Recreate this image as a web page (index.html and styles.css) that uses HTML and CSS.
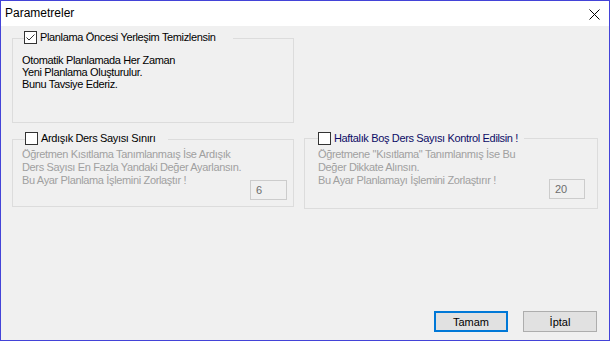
FILE: index.html
```html
<!DOCTYPE html>
<html lang="tr">
<head>
<meta charset="utf-8">
<title>Parametreler</title>
<link rel="stylesheet" href="styles.css">
</head>
<body>
<div class="window">
  <div class="titlebar">
    <span class="title">Parametreler</span>
    <svg class="close" width="11" height="11" viewBox="0 0 11 11"><path d="M0.5 0.5 L10.5 10.5 M10.5 0.5 L0.5 10.5" stroke="#000" stroke-width="1" fill="none"/></svg>
  </div>
  <div class="content">
    <div class="group g1">
      <div class="legend l1">
        <span class="box"><svg width="11" height="11" viewBox="0 0 11 11"><path d="M1.5 5.5 L4 8 L9.5 2.5" stroke="#333" stroke-width="1" fill="none"/></svg></span>
        <span class="ltext">Planlama Öncesi Yerleşim Temizlensin</span>
      </div>
      <div class="info">Otomatik Planlamada Her Zaman<br>Yeni Planlama Oluşturulur.<br>Bunu Tavsiye Ederiz.</div>
    </div>
    <div class="row">
      <div class="group g2">
        <div class="legend l2">
          <span class="box"></span>
          <span class="ltext">Ardışık Ders Sayısı Sınırı</span>
        </div>
        <div class="body">
          <div class="gray">Öğretmen Kısıtlama Tanımlanmaış İse Ardışık<br>Ders Sayısı En Fazla Yandaki Değer Ayarlansın.<br>Bu Ayar Planlama İşlemini Zorlaştır !</div>
          <div class="num n2">6</div>
        </div>
      </div>
      <div class="group g3">
        <div class="legend l3">
          <span class="box"></span>
          <span class="ltext navy">Haftalık Boş Ders Sayısı Kontrol Edilsin !</span>
        </div>
        <div class="body">
          <div class="gray">Öğretmene "Kısıtlama" Tanımlanmış İse Bu<br>Değer Dikkate Alınsın.<br>Bu Ayar Planlamayı İşlemini Zorlaştırır !</div>
          <div class="num n3">20</div>
        </div>
      </div>
    </div>
    <div class="buttons">
      <div class="btn default">Tamam</div>
      <div class="btn">İptal</div>
    </div>
  </div>
</div>
</body>
</html>
```
FILE: styles.css
```css
html, body {
  margin: 0;
  padding: 0;
  background: #f0f0f0;
}
.window {
  width: 610px;
  height: 341px;
  box-sizing: border-box;
  border: 1px solid #4343d8;
  display: flex;
  flex-direction: column;
  font-family: "Liberation Sans", Arial, sans-serif;
  font-size: 11px;
  color: #000;
}
.titlebar {
  height: 25px;
  background: #fff;
  display: flex;
  align-items: center;
  justify-content: space-between;
  padding: 0 9px 0 4px;
}
.title {
  font-size: 12px;
  margin-top: -1px;
}
.close {
  display: block;
  margin-top: 1px;
}
.content {
  flex: 1;
  background: #f0f0f0;
  display: flex;
  flex-direction: column;
  padding: 12px 11px 8px 11px;
  letter-spacing: -0.35px;
}
.group {
  border: 1px solid #dcdcdc;
  box-sizing: border-box;
  display: flex;
  flex-direction: column;
}
.g1 {
  width: 282px;
  height: 85px;
  padding-left: 9px;
}
.legend {
  display: flex;
  align-items: center;
  height: 13px;
  background: #f0f0f0;
  margin-top: -8px;
  white-space: nowrap;
}
.l1 { width: 209px; margin-left: 2px; }
.l2 { width: 143px; margin-left: 3px; }
.l3 { width: 206px; margin-left: 0; margin-top: -7px; }
.box {
  width: 11px;
  height: 11px;
  border: 1px solid #333;
  background: #fff;
  flex: none;
  display: flex;
}
.box svg { display: block; }
.ltext {
  margin-left: 3px;
  line-height: 13px;
}
.navy { color: #0c0c66; }
.info {
  margin-top: 10px;
  line-height: 12px;
}
.row {
  display: flex;
  align-items: flex-start;
  gap: 10px;
  margin-top: 16px;
}
.g2 {
  width: 282px;
  height: 68px;
  padding: 0 6px 0 9px;
}
.g3 {
  width: 294px;
  height: 71px;
  margin-top: -1px;
  padding: 0 12px 0 13px;
}
.body {
  display: flex;
  justify-content: space-between;
  margin-top: 3px;
}
.gray {
  color: #a0a0a0;
  line-height: 13px;
  white-space: nowrap;
}
.num {
  width: 37px;
  height: 20px;
  box-sizing: border-box;
  border: 1px solid #cccccc;
  color: #6d6d6d;
  line-height: 18px;
  padding-left: 5px;
  flex: none;
  letter-spacing: 0;
}
.n2 { margin-top: 32px; }
.n3 { margin-top: 31px; width: 36px; }
.buttons {
  margin-top: auto;
  display: flex;
  justify-content: flex-end;
  gap: 15px;
  padding-right: 1px;
  letter-spacing: 0;
}
.btn {
  width: 74px;
  height: 21px;
  box-sizing: border-box;
  background: #e1e1e1;
  border: 1px solid #adadad;
  display: flex;
  align-items: center;
  justify-content: center;
}
.btn.default {
  border: 2px solid #0078d7;
}
```
